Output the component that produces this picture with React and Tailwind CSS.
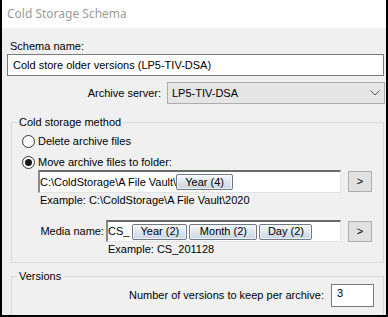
import React from 'react';

function Radio({ checked, label }) {
  return (
    <div className="flex items-center h-[15px]">
      <div className="w-[13px] h-[13px] rounded-full border border-[#333] bg-white flex items-center justify-center">
        {checked && <div className="w-[7px] h-[7px] rounded-full bg-[#1a1a1a]" />}
      </div>
      <span className="ml-[3px] leading-[13px]">{label}</span>
    </div>
  );
}

function Token({ label, w }) {
  return (
    <div
      className={`${w} h-[16px] shrink-0 flex items-center justify-center rounded-[2px] border border-[#6f7a86] bg-linear-to-b from-[#f5f8fc] to-[#c6d4e2] shadow-[inset_0_0_0_1px_rgba(255,255,255,0.7)] leading-[13px] text-black`}
    >
      {label}
    </div>
  );
}

function MoreButton() {
  return (
    <button className="ml-[7px] w-[24px] h-[21px] border border-[#adadad] bg-[#e1e1e1] flex items-center justify-center leading-[13px] text-black">
      &gt;
    </button>
  );
}

export default function App() {
  return (
    <div
      className="w-[388px] h-[317px] overflow-hidden bg-[#f0f0f0] border-x-2 border-b-2 border-black text-[11px] text-black"
      style={{ fontFamily: '"Liberation Sans", Arial, sans-serif' }}
    >
      <div className="h-[28px] bg-white flex items-center pl-[5px]">
        <span
          className="text-[12px] text-[#9a9a9a] leading-[16px]"
          style={{ fontFamily: '"Noto Sans", "Open Sans", sans-serif' }}
        >
          Cold Storage Schema
        </span>
      </div>

      <div className="h-[26px] pt-[12px] pl-[8px] leading-[13px]">Schema name:</div>
      <div className="ml-[5px] w-[377px] h-[22px] border border-[#7a7a7a] bg-white flex items-center px-[5px] leading-[13px]">
        Cold store older versions (LP5-TIV-DSA)
      </div>

      <div className="mt-[6px] flex items-center justify-end pr-[1px]">
        <span className="mr-[6px] leading-[13px]">Archive server:</span>
        <div className="w-[218px] h-[22px] border border-[#adadad] bg-[#e5e5e5] flex items-center justify-between pl-[4px] pr-[4px]">
          <span className="leading-[13px]">LP5-TIV-DSA</span>
          <svg width="10" height="6" viewBox="0 0 10 6">
            <polyline points="0.5,0.5 5,5 9.5,0.5" fill="none" stroke="#5a5a5a" strokeWidth="1" />
          </svg>
        </div>
      </div>

      <fieldset className="mt-[12px] ml-[9px] w-[373px] border border-[#d9d9d9] pb-[6px]">
        <legend className="ml-[5px] px-[2px] leading-[13px]">Cold storage method</legend>
        <div className="pl-[10px] pt-[5px]">
          <Radio label="Delete archive files" />
          <div className="mt-[6px]">
            <Radio checked label="Move archive files to folder:" />
          </div>
        </div>

        <div className="pl-[26px]">
          <div className="flex items-center">
            <div className="w-[303px] h-[23px] bg-white border-t-2 border-l-2 border-r border-b border-t-[#6a6a6a] border-l-[#8a8a8a] border-r-[#e3e3e3] border-b-[#e3e3e3] flex items-center overflow-hidden">
              <span className="leading-[13px] whitespace-nowrap">C:\ColdStorage\A File Vault\</span>
              <Token label="Year (4)" w="w-[57px]" />
            </div>
            <MoreButton />
          </div>
          <div className="mt-[1px] pl-[2px] leading-[13px]">Example: C:\ColdStorage\A File Vault\2020</div>

          <div className="mt-[13px] flex items-center">
            <span className="w-[66px] text-right leading-[13px]">Media name:</span>
            <div className="ml-[2px] w-[235px] h-[22px] bg-white border-t-2 border-l-2 border-r border-b border-t-[#6a6a6a] border-l-[#8a8a8a] border-r-[#e3e3e3] border-b-[#e3e3e3] flex items-center gap-[2px] overflow-hidden">
              <span className="leading-[13px] mr-[1px]">CS_</span>
              <Token label="Year (2)" w="w-[55px]" />
              <Token label="Month (2)" w="w-[68px]" />
              <Token label="Day (2)" w="w-[53px]" />
            </div>
            <MoreButton />
          </div>
          <div className="mt-[1px] pl-[70px] leading-[13px]">Example: CS_201128</div>
        </div>
      </fieldset>

      <fieldset className="mt-[7px] ml-[9px] w-[373px] h-[60px] border border-[#d9d9d9]">
        <legend className="ml-[5px] px-[2px] leading-[13px]">Versions</legend>
        <div className="mt-[1px] flex items-center justify-end pr-[9px]">
          <span className="mr-[7px] leading-[13px]">Number of versions to keep per archive:</span>
          <div className="w-[43px] h-[23px] border border-[#7a7a7a] bg-white pl-[5px] pt-[2px] leading-[13px]">3</div>
        </div>
      </fieldset>
    </div>
  );
}
